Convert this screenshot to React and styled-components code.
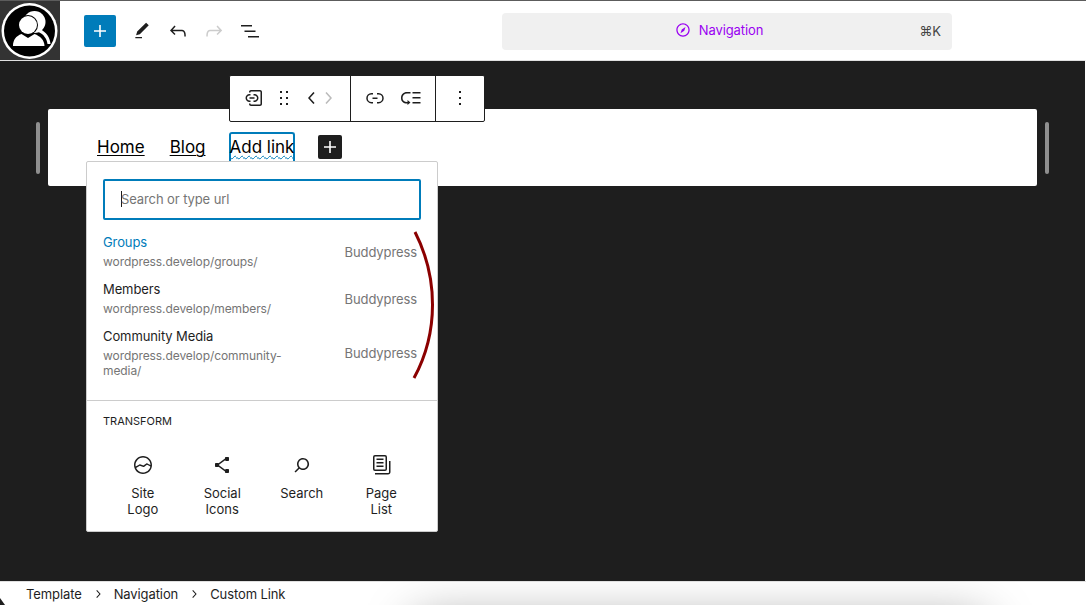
import React from "react";
import styled, { createGlobalStyle } from "styled-components";

const GlobalStyle = createGlobalStyle`
  html, body { margin: 0; padding: 0; background: #fff; }
  body { font-family: Inter, "Liberation Sans", sans-serif; color: #1e1e1e; }
  * { box-sizing: border-box; }
`;

const Icon = ({ d, size = 24, fill = "currentColor" }) => (
  <svg width={size} height={size} viewBox="0 0 24 24" fill={fill} style={{ display: "block", flexShrink: 0 }}>
    <path d={d} />
  </svg>
);

const icons = {
  plus: "M18 11.2h-5.2V6h-1.6v5.2H6v1.6h5.2V18h1.6v-5.2H18z",
  pencil: "M20.1 5.1L16.9 2 6.2 12.7l-1.3 4.4 4.5-1.3L20.1 5.1zM4 20.8h8v-1.5H4v1.5z",
  undo: "M18.3 11.7c-.6-.6-1.4-.9-2.3-.9H6.7l2.9-3.3-1.1-1-4.5 5L8.5 16l1-1-2.7-2.7H16c.5 0 .9.2 1.3.5 1 1 1 3.4 1 4.5v.3h1.5v-.2c0-1.5 0-4.3-1.5-5.7z",
  redo: "M15.6 6.5l-1.1 1 2.9 3.3H8c-.9 0-1.7.3-2.3.9-1.4 1.5-1.4 4.2-1.4 5.6v.2h1.5v-.3c0-1.1 0-3.5 1-4.5.3-.3.7-.5 1.3-.5h9.2L14.5 15l1.1 1.1 4.6-4.6-4.6-5z",
  list: "M3 6h11v1.5H3V6zm3.5 5.5h11V13h-11v-1.5zM21 17H10v1.5h11V17z",
  nav: "M12 4c-4.4 0-8 3.6-8 8s3.6 8 8 8 8-3.6 8-8-3.6-8-8-8zm0 14.5c-3.6 0-6.5-2.9-6.5-6.5S8.4 5.5 12 5.5s6.5 2.9 6.5 6.5-2.9 6.5-6.5 6.5zM9 16l4.5-3L15 8.4l-4.5 3L9 16z",
  customLink: "M12.5 14.5h-1V16h1c2.2 0 4-1.8 4-4s-1.8-4-4-4h-1v1.5h1c1.4 0 2.5 1.1 2.5 2.5s-1.1 2.5-2.5 2.5zm-4 1.5v-1.5h-1C6.1 14.5 5 13.4 5 12s1.1-2.5 2.5-2.5h1V8h-1c-2.2 0-4 1.8-4 4s1.8 4 4 4h1zm-1-3.2h5v-1.5h-5v1.5zM18 4H9c-1.1 0-2 .9-2 2v.5h1.5V6c0-.3.2-.5.5-.5h9c.3 0 .5.2.5.5v12c0 .3-.2.5-.5.5H9c-.3 0-.5-.2-.5-.5v-.5H7v.5c0 1.1.9 2 2 2h9c1.1 0 2-.9 2-2V6c0-1.1-.9-2-2-2z",
  drag: "M8 7h2V5H8v2zm0 6h2v-2H8v2zm0 6h2v-2H8v2zm6-14v2h2V5h-2zm0 8h2v-2h-2v2zm0 6h2v-2h-2v2z",
  left: "M14.6 7l-1.2-1L8 12l5.4 6 1.2-1-4.6-5z",
  right: "M10.6 6L9.4 7l4.6 5-4.6 5 1.2 1 5.4-6z",
  link: "M10 17.389H8.444A5.194 5.194 0 1 1 8.444 7H10v1.5H8.444a3.694 3.694 0 0 0 0 7.389H10v1.5ZM14 7h1.556a5.194 5.194 0 0 1 0 10.39H14v-1.5h1.556a3.694 3.694 0 0 0 0-7.39H14V7Zm-4.5 6h5v-1.5h-5V13Z",
  submenu: "M2 12c0 3.6 2.4 5.5 6 5.5h.5V19l3-2.5-3-2.5v2H8c-2.5 0-4.5-1.5-4.5-4s2-4.5 4.5-4.5h3.5V6H8c-3.6 0-6 2.4-6 6zm19.5-1h-8v1.5h8V11zm0 5h-8v1.5h8V16zm0-10h-8v1.5h8V6z",
  more: "M13 19h-2v-2h2v2zm0-6h-2v-2h2v2zm0-6h-2V5h2v2z",
  logo: "M12 3c-5 0-9 4-9 9s4 9 9 9 9-4 9-9-4-9-9-9zm0 1.5c4.1 0 7.5 3.4 7.5 7.5v.1c-1.4-.8-3.3-1.7-3.4-1.8-.2-.1-.5-.1-.8.1l-2.9 2.1L9 11.3c-.2-.1-.4 0-.6.1l-3.7 2.2c-.1-.5-.2-1-.2-1.5 0-4.1 3.4-7.6 7.5-7.6zm0 15c-3.1 0-5.7-1.9-6.9-4.5l3.7-2.2 3.5 1.2c.2.1.5 0 .7-.1l2.9-2.1c.8.4 2.5 1.2 3.5 1.9-.9 3.3-3.9 5.8-7.4 5.8z",
  share: "M9 11.8l6.1-4.5c.1.4.4.7.9.7h2c.6 0 1-.4 1-1V5c0-.6-.4-1-1-1h-2c-.6 0-1 .4-1 1v.4l-6.4 4.8c-.2-.1-.4-.2-.6-.2H6c-.6 0-1 .4-1 1v2c0 .6.4 1 1 1h2c.2 0 .4-.1.6-.2l6.4 4.8v.4c0 .6.4 1 1 1h2c.6 0 1-.4 1-1v-2c0-.6-.4-1-1-1h-2c-.5 0-.8.3-.9.7L9 12.2v-.4z",
  search: "M13 5c-3.3 0-6 2.7-6 6 0 1.4.5 2.7 1.3 3.7l-3.8 3.8 1.1 1.1 3.8-3.8c1 .8 2.3 1.3 3.7 1.3 3.3 0 6-2.7 6-6S16.3 5 13 5zm0 10.5c-2.5 0-4.5-2-4.5-4.5s2-4.5 4.5-4.5 4.5 2 4.5 4.5-2 4.5-4.5 4.5z",
  pages: "M14.5 5.5h-7V7h7V5.5ZM7.5 9h7v1.5h-7V9Zm7 3.5h-7V14h7v-1.5ZM16 2H6a2 2 0 0 0-2 2v12a2 2 0 0 0 2 2h10a2 2 0 0 0 2-2V4a2 2 0 0 0-2-2ZM6 3.5h10a.5.5 0 0 1 .5.5v12a.5.5 0 0 1-.5.5H6a.5.5 0 0 1-.5-.5V4a.5.5 0 0 1 .5-.5ZM20 8v11c0 .69-.31 1-.999 1H6v1.5h13.001c1.52 0 2.499-.982 2.499-2.5V8H20Z",
};

const Page = styled.div`
  width: 1086px;
  height: 605px;
  display: flex;
  flex-direction: column;
  overflow: hidden;
  border-top: 1px solid #5c5c5c;
`;

const Header = styled.header`
  height: 59px;
  display: flex;
  align-items: center;
  background: #fff;
`;

const LogoBox = styled.div`
  width: 60px;
  height: 59px;
  background: #333;
  display: flex;
  align-items: center;
  justify-content: center;
  flex-shrink: 0;
`;

const Tools = styled.div`
  display: flex;
  align-items: center;
  margin-left: 24px;
  width: 418px;
`;

const InserterButton = styled.div`
  width: 32px;
  height: 32px;
  border-radius: 2px;
  background: #007cba;
  color: #fff;
  display: flex;
  align-items: center;
  justify-content: center;
  margin-right: 8px;
`;

const ToolButton = styled.div`
  width: 36px;
  height: 36px;
  display: flex;
  align-items: center;
  justify-content: center;
  color: ${(props) => (props.$disabled ? "#ccc" : "#1e1e1e")};
`;

const CommandBar = styled.div`
  width: 450px;
  height: 37px;
  border-radius: 4px;
  background: #f0f0f0;
  position: relative;
  display: flex;
  align-items: center;
  justify-content: center;
  margin-top: 2px;
  padding: 0 18px 3px 0;
  color: #9a00f2;
  font-size: 13px;
  letter-spacing: -0.1px;
  gap: 6px;
`;

const Shortcut = styled.span`
  position: absolute;
  right: 11px;
  top: 10px;
  color: #444;
  font-size: 13px;
`;

const Canvas = styled.main`
  position: relative;
  flex: 1;
  background: #1e1e1e;
  border-top: 1px solid #e0e0e0;
  border-right: 1px solid #fff;
  padding: 48px 48px 0;
`;

const Block = styled.section`
  width: 989px;
  height: 77px;
  background: #fff;
  border-radius: 2px;
  padding: 24px 0 0 49px;
`;

const Nav = styled.nav`
  display: flex;
  align-items: flex-start;
  font-size: 17px;
  line-height: 28px;
  color: #000;
`;

const NavLink = styled.span`
  text-decoration: underline;
  text-decoration-thickness: 1px;
  text-underline-offset: 2px;
  margin-right: 25px;
`;

const ActiveLink = styled.span`
  margin: -1px 23px 0 -2px;
  height: 30px;
  width: 66px;
  line-height: 26px;
  text-indent: -1px;
  border: 2px solid #007cba;
  border-bottom: 0;
  border-radius: 3px 3px 0 0;
  white-space: nowrap;
  text-decoration: underline wavy #007cba;
  text-decoration-thickness: 1px;
  text-underline-offset: 2px;
`;

const NavPlus = styled.div`
  width: 24px;
  height: 24px;
  margin-top: 2px;
  border-radius: 2px;
  background: #1e1e1e;
  color: #fff;
  display: flex;
  align-items: center;
  justify-content: center;
`;

const Handle = styled.div`
  position: absolute;
  top: 61px;
  left: ${(props) => props.$left}px;
  width: 4px;
  height: 52px;
  border-radius: 2px;
  background: #8f8f8f;
`;

const BlockToolbar = styled.div`
  position: absolute;
  left: 229px;
  top: 14px;
  height: 47px;
  display: flex;
  background: #fff;
  border: 1px solid #1e1e1e;
  border-radius: 2px;
  z-index: 3;
`;

const ToolbarGroup = styled.div`
  display: flex;
  align-items: center;
  padding: 0 ${(props) => props.$padRight}px 1px 12px;
  border-left: ${(props) => (props.$first ? "0" : "1px solid #1e1e1e")};
`;

const ToolbarSlot = styled.div`
  width: ${(props) => props.$w}px;
  height: 24px;
  display: flex;
  align-items: center;
  justify-content: center;
  color: ${(props) => (props.$disabled ? "#bbb" : "#1e1e1e")};
`;

const Popover = styled.div`
  position: absolute;
  left: 86px;
  top: 100px;
  width: 352px;
  height: 371px;
  background: #fff;
  border: 1px solid #ccc;
  border-radius: 2px;
  z-index: 2;
`;

const SearchBox = styled.div`
  position: relative;
  margin: 17px 16px 0;
  height: 41px;
  border: 2px solid #007cba;
  border-radius: 2px;
  padding: 0 0 2px 16px;
  display: flex;
  align-items: center;
  font-size: 13px;
  letter-spacing: -0.1px;
  color: #757575;
`;

const Caret = styled.span`
  width: 1px;
  height: 16px;
  background: #1e1e1e;
  margin-right: -1px;
`;

const Results = styled.ul`
  list-style: none;
  margin: 0;
  padding: 12px 20px 0 16px;
`;

const Result = styled.li`
  display: flex;
  align-items: center;
  justify-content: space-between;
  margin-bottom: 10px;
`;

const ResultText = styled.div`
  width: 190px;
`;

const ResultTitle = styled.div`
  font-size: 13px;
  line-height: 20px;
  letter-spacing: -0.1px;
  color: ${(props) => (props.$active ? "#007cba" : "#1e1e1e")};
`;

const ResultUrl = styled.div`
  font-size: 12px;
  line-height: 15px;
  letter-spacing: -0.08px;
  color: #757575;
  margin-top: 2px;
  overflow-wrap: anywhere;
`;

const ResultType = styled.div`
  font-size: 13px;
  letter-spacing: -0.1px;
  margin-top: 2px;
  color: #757575;
`;

const Arc = styled.svg`
  position: absolute;
  left: 320px;
  top: 65px;
`;

const Section = styled.div`
  position: absolute;
  top: 238px;
  left: 0;
  right: 0;
  border-top: 1px solid #ccc;
  padding: 14px 16px 0;
`;

const SectionTitle = styled.div`
  font-size: 11px;
  line-height: 12px;
  font-weight: 400;
  text-transform: uppercase;
`;

const TransformGrid = styled.div`
  display: grid;
  grid-template-columns: repeat(4, 79.5px);
  margin-top: 26px;
`;

const TransformItem = styled.div`
  display: flex;
  flex-direction: column;
  align-items: center;
  text-align: center;
  font-size: 13px;
  line-height: 16px;
  color: #1e1e1e;
`;

const TransformLabel = styled.div`
  margin-top: 8px;
  width: 50px;
`;

const Footer = styled.footer`
  position: relative;
  height: 24px;
  background: #fff;
  display: flex;
  align-items: center;
  padding-left: 26px;
  font-size: 13px;
  letter-spacing: -0.1px;
  overflow: hidden;
  border-top: 1px solid #e0e0e0;
`;

const Crumb = styled.span`
  color: #1e1e1e;
`;

const CrumbSep = styled.span`
  margin: 0 8px;
  display: flex;
`;

const BottomShadow = styled.div`
  position: absolute;
  left: 415px;
  top: 38px;
  width: 570px;
  height: 60px;
  box-shadow: 0 0 50px rgba(0, 0, 0, 0.4);
`;

const CornerMark = styled.div`
  position: absolute;
  left: 0;
  bottom: 0;
  width: 5px;
  height: 7px;
  background: #1e1e1e;
  clip-path: polygon(0 0, 100% 100%, 0 100%);
`;

const transforms = [
  { icon: "logo", label: "Site Logo" },
  { icon: "share", label: "Social Icons" },
  { icon: "search", label: "Search" },
  { icon: "pages", label: "Page List" },
];

const results = [
  { title: "Groups", url: "wordpress.develop/groups/", active: true },
  { title: "Members", url: "wordpress.develop/members/" },
  { title: "Community Media", url: "wordpress.develop/community-media/" },
];

const App = () => (
  <Page>
    <GlobalStyle />
    <Header>
      <LogoBox>
        <svg width="58" height="58" viewBox="0 0 58 58">
          <circle cx="28.5" cy="29" r="28" fill="#fff" />
          <circle cx="28.5" cy="29" r="25.5" fill="#000" />
          <circle cx="33.500" cy="20" r="11" fill="#fff" />
          <path d="M39 27c6 3 10 8 10.500 15h-3c-.5-5-4-10-9-12z" fill="#fff" />
          <circle cx="27" cy="23" r="10" fill="#000" />
          <circle cx="27" cy="23" r="9" fill="#fff" />
          <path d="M11 44c0-6 3-11 9-13l7 4 7-4c6 2 10 7 10 13z" fill="#000" />
          <path d="M12 44c0-6 3-10 8.500-12l6.500 4 6.500-4c5.500 2 10 6 10 12z" fill="#fff" />
        </svg>
      </LogoBox>
      <Tools>
        <InserterButton><Icon d={icons.plus} /></InserterButton>
        <ToolButton><Icon d={icons.pencil} size={20} /></ToolButton>
        <ToolButton><Icon d={icons.undo} /></ToolButton>
        <ToolButton $disabled><Icon d={icons.redo} /></ToolButton>
        <ToolButton><Icon d={icons.list} /></ToolButton>
      </Tools>
      <CommandBar>
        <Icon d={icons.nav} size={20} />
        <span>Navigation</span>
        <Shortcut>⌘K</Shortcut>
      </CommandBar>
    </Header>
    <Canvas>
      <Handle $left={36} />
      <Handle $left={1045} />
      <BlockToolbar>
        <ToolbarGroup $first $padRight={16}>
          <ToolbarSlot $w={24}><Icon d={icons.customLink} /></ToolbarSlot>
          <ToolbarSlot $w={36}><Icon d={icons.drag} /></ToolbarSlot>
          <ToolbarSlot $w={20}><Icon d={icons.left} /></ToolbarSlot>
          <ToolbarSlot $w={12} $disabled><Icon d={icons.right} /></ToolbarSlot>
        </ToolbarGroup>
        <ToolbarGroup $padRight={0}>
          <ToolbarSlot $w={24}><Icon d={icons.link} /></ToolbarSlot>
          <ToolbarSlot $w={48}><Icon d={icons.submenu} /></ToolbarSlot>
        </ToolbarGroup>
        <ToolbarGroup $padRight={12}>
          <ToolbarSlot $w={24}><Icon d={icons.more} /></ToolbarSlot>
        </ToolbarGroup>
      </BlockToolbar>
      <Block>
        <Nav>
          <NavLink>Home</NavLink>
          <NavLink>Blog</NavLink>
          <ActiveLink>Add link</ActiveLink>
          <NavPlus><Icon d={icons.plus} /></NavPlus>
        </Nav>
      </Block>
      <Popover>
        <SearchBox>
          <Caret />
          Search or type url
        </SearchBox>
        <Results>
          {results.map((r) => (
            <Result key={r.title}>
              <ResultText>
                <ResultTitle $active={r.active}>{r.title}</ResultTitle>
                <ResultUrl>{r.url}</ResultUrl>
              </ResultText>
              <ResultType>Buddypress</ResultType>
            </Result>
          ))}
        </Results>
        <Arc width="30" height="156" viewBox="0 0 30 156" fill="none">
          <path d="M8 5C31 50 32 105 7 151" stroke="#8b0000" strokeWidth="3" />
        </Arc>
        <Section>
          <SectionTitle>Transform</SectionTitle>
          <TransformGrid>
            {transforms.map((t) => (
              <TransformItem key={t.label}>
                <Icon d={icons[t.icon]} />
                <TransformLabel>{t.label}</TransformLabel>
              </TransformItem>
            ))}
          </TransformGrid>
        </Section>
      </Popover>
    </Canvas>
    <Footer>
      <CornerMark />
      <Crumb>Template</Crumb>
      <CrumbSep><Icon d={icons.right} size={16} /></CrumbSep>
      <Crumb>Navigation</Crumb>
      <CrumbSep><Icon d={icons.right} size={16} /></CrumbSep>
      <Crumb>Custom Link</Crumb>
      <BottomShadow />
    </Footer>
  </Page>
);

export default App;
